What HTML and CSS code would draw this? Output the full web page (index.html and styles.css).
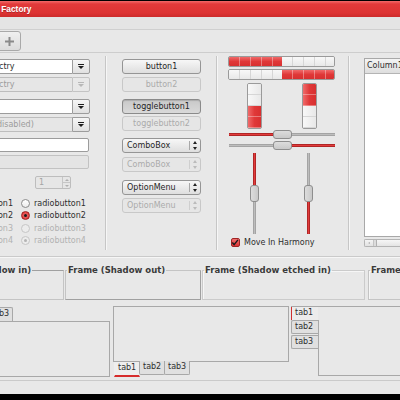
FILE: index.html
```html
<!DOCTYPE html>
<html lang="en">
<head>
  <meta charset="UTF-8">
  <title>Widget Factory</title>
  <link rel="stylesheet" href="styles.css">
</head>
<body>
  <div class="window">
    <div class="titlebar"><span class="title">Widget Factory</span></div>
    <div class="menubar"></div>
    <div class="toolbar">
      <button class="tool-btn">
        <svg width="11" height="11" viewBox="0 0 11 11"><path d="M5.5 1v9M1 5.5h9" stroke="#8a8a8a" stroke-width="2" fill="none"/></svg>
      </button>
    </div>

    <div class="main">
      <!-- entries column -->
      <div class="col col-entries">
        <div class="combo-entry">
          <div class="entry"><span class="cut-text">ctry</span></div>
          <div class="drop"><span class="arrow"></span></div>
        </div>
        <div class="combo-entry disabled pair">
          <div class="entry"><span class="cut-text">ctry</span></div>
          <div class="drop"><span class="arrow"></span></div>
        </div>
        <div class="combo-entry group">
          <div class="entry"></div>
          <div class="drop"><span class="arrow"></span></div>
        </div>
        <div class="combo-entry half-disabled pair">
          <div class="entry"><span class="cut-text cut-d">disabled)</span></div>
          <div class="drop"><span class="arrow"></span></div>
        </div>
        <div class="text-entry group"></div>
        <div class="text-entry disabled pair"></div>
        <div class="spin">
          <span class="spin-value">1</span>
          <span class="spin-btns"><span class="up"></span><span class="down"></span></span>
        </div>
        <div class="radios">
          <div class="radio-row">
            <span class="offside">radiobutton1</span>
            <span class="radio"></span><span>radiobutton1</span>
          </div>
          <div class="radio-row">
            <span class="offside">radiobutton2</span>
            <span class="radio checked"></span><span>radiobutton2</span>
          </div>
          <div class="radio-row disabled">
            <span class="offside">radiobutton3</span>
            <span class="radio"></span><span>radiobutton3</span>
          </div>
          <div class="radio-row disabled">
            <span class="offside">radiobutton4</span>
            <span class="radio checked"></span><span>radiobutton4</span>
          </div>
        </div>
      </div>
      <div class="vsep"></div>

      <!-- buttons column -->
      <div class="col col-buttons">
        <button class="btn">button1</button>
        <button class="btn pair" disabled>button2</button>
        <button class="btn group pressed">togglebutton1</button>
        <button class="btn pair-tight" disabled>togglebutton2</button>
        <button class="btn menu group">ComboBox<span class="menu-arrows"></span></button>
        <button class="btn menu pair-loose" disabled>ComboBox<span class="menu-arrows"></span></button>
        <button class="btn menu group-loose">OptionMenu<span class="menu-arrows"></span></button>
        <button class="btn menu pair" disabled>OptionMenu<span class="menu-arrows"></span></button>
      </div>
      <div class="vsep"></div>

      <!-- ranges column -->
      <div class="col col-ranges">
        <div class="progress"><div class="fill" style="width: 50%"></div><div class="rest"></div></div>
        <div class="progress"><div class="rest"></div><div class="fill" style="width: 50%"></div></div>
        <div class="vprogress-row">
          <div class="vprogress"><div class="rest"></div><div class="fill" style="height: 50%"></div></div>
          <div class="vprogress"><div class="fill" style="height: 50%"></div><div class="rest"></div></div>
        </div>
        <div class="hscale first">
          <div class="track red" style="width: 47px"></div>
          <div class="handle"></div>
          <div class="track"></div>
        </div>
        <div class="hscale">
          <div class="track" style="width: 44px"></div>
          <div class="handle"></div>
          <div class="track red"></div>
        </div>
        <div class="vscale-row">
          <div class="vscale">
            <div class="track red" style="height: 32px"></div>
            <div class="handle"></div>
            <div class="track"></div>
          </div>
          <div class="vscale">
            <div class="track" style="height: 33px"></div>
            <div class="handle"></div>
            <div class="track red"></div>
          </div>
        </div>
        <label class="check">
          <span class="box">
            <svg width="9" height="9" viewBox="0 0 9 9"><path d="M1.5 4.5l2 2.5L7.8 1.5" stroke="#1a1a1a" stroke-width="1.6" fill="none"/></svg>
          </span>
          Move In Harmony
        </label>
      </div>
      <div class="vsep"></div>

      <!-- tree column -->
      <div class="col col-tree">
        <div class="tree">
          <div class="tree-head">Column1</div>
          <div class="tree-body"></div>
        </div>
        <div class="hscroll">
          <span class="scroll-btn"><span class="tiny-arrow"></span></span>
          <span class="scroll-slider"></span>
        </div>
      </div>
    </div>

    <div class="frames">
      <fieldset class="frame shadow-in"><legend>Frame (Shadow in)</legend></fieldset>
      <fieldset class="frame shadow-out"><legend>Frame (Shadow out)</legend></fieldset>
      <fieldset class="frame etched-in"><legend>Frame (Shadow etched in)</legend></fieldset>
      <fieldset class="frame etched-out"><legend>Frame (Shadow etched out)</legend></fieldset>
    </div>

    <div class="notebooks">
      <div class="nb nb-top">
        <div class="tabs">
          <span class="tab active">tab1</span>
          <span class="tab">tab2</span>
          <span class="tab">tab3</span>
        </div>
        <div class="page"></div>
      </div>
      <div class="nb nb-bottom">
        <div class="page"></div>
        <div class="tabs">
          <span class="tab active">tab1</span>
          <span class="tab">tab2</span>
          <span class="tab">tab3</span>
        </div>
      </div>
      <div class="nb nb-left">
        <div class="tabs">
          <span class="tab active">tab1</span>
          <span class="tab">tab2</span>
          <span class="tab">tab3</span>
        </div>
        <div class="page"></div>
      </div>
    </div>

    <div class="statusbar"></div>
  </div>
</body>
</html>
```

FILE: styles.css
```css
* {
  box-sizing: border-box;
}

body {
  margin: 0;
  width: 400px;
  height: 400px;
  overflow: hidden;
  background: #000;
  font-family: "DejaVu Sans", sans-serif;
  font-size: 8px;
  color: #2e2e2e;
}

.window {
  margin-top: 1px;
  height: 393px;
  background: #e8e8e8;
  display: flex;
  flex-direction: column;
  overflow: hidden;
}

/* title + bars */
.titlebar {
  height: 16px;
  flex-shrink: 0;
  background: linear-gradient(#f26a6a 0, #e23a3a 3px, #dd3333 12px, #cc2b2b 100%);
  display: flex;
  align-items: center;
  overflow: hidden;
}

.title {
  font-family: "Liberation Sans", Arial, sans-serif;
  font-weight: bold;
  font-size: 8.4px;
  color: #fff;
  margin-left: -29px;
  white-space: nowrap;
  text-shadow: 0 1px 0 rgba(0, 0, 0, 0.25);
}

.menubar {
  height: 13px;
  flex-shrink: 0;
  background: #e4e4e4;
  border-bottom: 1px solid #cfcfcf;
}

.toolbar {
  height: 23px;
  flex-shrink: 0;
  border-bottom: 1px solid #cdcdcd;
  padding-top: 1px;
}

.tool-btn {
  margin: 0 0 0 -3px;
  width: 24px;
  height: 20px;
  padding: 0;
  border: 1px solid #a9a9a9;
  border-radius: 3px;
  background: linear-gradient(#f0f0f0, #dcdcdc);
  display: flex;
  align-items: center;
  justify-content: center;
}

/* main area */
.main {
  height: 204px;
  flex-shrink: 0;
  display: flex;
  border-bottom: 1px solid #cacaca;
}

.col {
  display: flex;
  flex-direction: column;
  flex-shrink: 0;
}

.vsep {
  width: 1px;
  flex-shrink: 0;
  margin: 3px 0 6px;
  background: #c6c6c6;
  box-shadow: 1px 0 0 #f6f6f6;
}

/* entries */
.col-entries {
  width: 145px;
  margin-left: -40px;
  padding: 6px 15px 0 0;
}

.combo-entry {
  display: flex;
  height: 15px;
}

.pair {
  margin-top: 3px;
}

.pair-tight {
  margin-top: 2px;
}

.pair-loose {
  margin-top: 4px;
}

.group {
  margin-top: 7px;
}

.group-loose {
  margin-top: 8px;
}

.entry {
  flex: 1;
  background: #fff;
  border: 1px solid #9c9c9c;
  border-right: none;
  border-radius: 2px 0 0 2px;
  padding-left: 40px;
  display: flex;
  align-items: center;
  overflow: hidden;
  white-space: nowrap;
}

.cut-text {
  margin-left: -2px;
}

.cut-d {
  margin-left: -4px;
}

.drop {
  width: 18px;
  border: 1px solid #9c9c9c;
  border-radius: 0 2px 2px 0;
  background: linear-gradient(#f6f6f6, #e0e0e0);
  display: flex;
  align-items: center;
  justify-content: center;
}

.arrow {
  width: 0;
  height: 0;
  border-left: 3px solid transparent;
  border-right: 3px solid transparent;
  border-top: 3px solid #1e1e1e;
  position: relative;
  top: 1px;
}

.arrow::before {
  content: "";
  display: block;
  width: 6px;
  height: 1px;
  background: #1e1e1e;
  margin: -5px 0 0 -3px;
}

.combo-entry.disabled .entry,
.combo-entry.half-disabled .entry {
  background: #e6e6e6;
  border-color: #bdbdbd;
  color: #9c9c9c;
}

.combo-entry.disabled .drop {
  border-color: #c4c4c4;
  background: #e8e8e8;
}

.combo-entry.disabled .arrow {
  border-top-color: #b8b8b8;
}

.combo-entry.disabled .arrow::before {
  background: #b8b8b8;
}

.text-entry {
  height: 14px;
  width: 129px;
  background: #fff;
  border: 1px solid #9c9c9c;
  border-radius: 2px;
  margin-top: 6px;
}

.text-entry.disabled {
  background: #e4e4e4;
  border-color: #c2c2c2;
  margin-top: 3px;
}

.spin {
  margin: 7px 0 0 75px;
  width: 36px;
  height: 13px;
  display: flex;
  border: 1px solid #bdbdbd;
  border-radius: 2px;
  background: #e6e6e6;
  color: #a4a4a4;
}

.spin-value {
  flex: 1;
  padding-left: 3px;
  line-height: 11px;
}

.spin-btns {
  width: 8px;
  display: flex;
  flex-direction: column;
  border-left: 1px solid #c6c6c6;
}

.spin-btns span {
  flex: 1;
  display: flex;
  align-items: center;
  justify-content: center;
}

.spin-btns .up {
  border-bottom: 1px solid #c6c6c6;
}

.spin-btns .up::after,
.spin-btns .down::after {
  content: "";
  border-left: 2px solid transparent;
  border-right: 2px solid transparent;
}

.spin-btns .up::after {
  border-bottom: 2px solid #b0b0b0;
}

.spin-btns .down::after {
  border-top: 2px solid #b0b0b0;
}

.radios {
  margin-top: 8px;
}

.radio-row {
  height: 12.5px;
  display: flex;
  align-items: center;
  white-space: nowrap;
}

.offside {
  width: 53px;
  text-align: right;
}

.radio {
  width: 9px;
  height: 9px;
  border-radius: 50%;
  border: 1px solid #8c8c8c;
  background: linear-gradient(#fff, #ececec);
  margin: 0 4px 0 8px;
  flex-shrink: 0;
  display: flex;
  align-items: center;
  justify-content: center;
}

.radio.checked {
  border-color: #a02020;
  background: radial-gradient(circle, #f07070 0, #e03c3c 80%);
}

.radio.checked::after {
  content: "";
  width: 3px;
  height: 3px;
  border-radius: 50%;
  background: #1a1a1a;
}

.radio-row.disabled {
  color: #b2b2b2;
}

.radio-row.disabled .radio {
  border-color: #c6c6c6;
  background: #ececec;
}

.radio-row.disabled .radio.checked::after {
  background: #b4b4b4;
}

/* buttons */
.col-buttons {
  width: 110px;
  padding: 6px 0 0 16px;
}

.btn {
  width: 79px;
  height: 15px;
  padding: 0;
  font-family: inherit;
  font-size: 8px;
  color: #262626;
  border: 1px solid #959595;
  border-radius: 3px;
  background: linear-gradient(#f7f7f7, #dedede);
  flex-shrink: 0;
}

.btn:disabled {
  color: #ababab;
  border-color: #c8c8c8;
  background: #e6e6e6;
}

.btn.pressed {
  background: linear-gradient(#c9c9c9, #d9d9d9);
  border-color: #8a8a8a;
  box-shadow: inset 0 1px 1px rgba(0, 0, 0, 0.15);
}

.btn.menu {
  display: flex;
  align-items: center;
  padding-left: 4px;
  text-align: left;
}

.menu-arrows {
  margin-left: auto;
  width: 11px;
  height: 9px;
  border-left: 1px solid #a8a8a8;
  position: relative;
}

.menu-arrows::before,
.menu-arrows::after {
  content: "";
  position: absolute;
  left: 3px;
  border-left: 2.5px solid transparent;
  border-right: 2.5px solid transparent;
}

.menu-arrows::before {
  top: 0;
  border-bottom: 3px solid #222;
}

.menu-arrows::after {
  bottom: 0;
  border-top: 3px solid #222;
}

.btn:disabled .menu-arrows {
  border-left-color: #cfcfcf;
}

.btn:disabled .menu-arrows::before {
  border-bottom-color: #bbb;
}

.btn:disabled .menu-arrows::after {
  border-top-color: #bbb;
}

/* ranges */
.col-ranges {
  width: 131px;
  padding: 3px 0 0 11px;
}

.progress {
  width: 107px;
  height: 11px;
  border: 1px solid #9a9a9a;
  border-radius: 2px;
  display: flex;
  overflow: hidden;
  margin-bottom: 2px;
}

.progress .fill,
.vprogress .fill {
  background:
    repeating-linear-gradient(90deg, transparent 0 10px, rgba(255, 255, 255, 0.35) 10px 11px),
    linear-gradient(#f06a6a, #e03838 50%, #d83030);
}

.progress .rest {
  flex: 1;
  background:
    repeating-linear-gradient(90deg, transparent 0 10px, #d6d6d6 10px 11px),
    linear-gradient(#f8f8f8, #e8e8e8);
}

.vprogress-row {
  display: flex;
  gap: 40px;
  padding-left: 19px;
  margin-top: 1px;
}

.vprogress {
  width: 15px;
  height: 46px;
  border: 1px solid #9a9a9a;
  border-radius: 2px;
  display: flex;
  flex-direction: column;
  overflow: hidden;
}

.vprogress .rest {
  flex: 1;
  background:
    repeating-linear-gradient(180deg, transparent 0 10px, #d6d6d6 10px 11px),
    linear-gradient(90deg, #f8f8f8, #e8e8e8);
}

.vprogress .fill {
  background:
    repeating-linear-gradient(180deg, transparent 0 10px, rgba(255, 255, 255, 0.35) 10px 11px),
    linear-gradient(90deg, #f06a6a, #e03838 50%, #d83030);
}

.hscale {
  width: 107px;
  height: 9px;
  display: flex;
  align-items: center;
  padding-left: 1px;
  margin-top: 2px;
}

.hscale.first {
  margin-top: 1px;
}

.track {
  flex: 1;
  height: 3px;
  background: #bdbdbd;
  border: 1px solid #a4a4a4;
  border-width: 1px 0;
}

.track.red {
  background: #e23c3c;
  border-color: #b02626;
}

.hscale .handle {
  width: 19px;
  height: 9px;
  border: 1px solid #8e8e8e;
  border-radius: 3px;
  background:
    radial-gradient(circle, #9a9a9a 0.5px, transparent 0.8px) 5px 1px / 2px 2px,
    linear-gradient(#fbfbfb, #dedede);
}

.vscale-row {
  display: flex;
  gap: 45px;
  padding-left: 22px;
  margin-top: 3px;
}

.vscale {
  width: 9px;
  height: 81px;
  display: flex;
  flex-direction: column;
  align-items: center;
}

.vscale .track {
  width: 3px;
  height: auto;
  border-width: 0 1px;
}

.vscale .handle {
  width: 9px;
  height: 17px;
  border: 1px solid #8e8e8e;
  border-radius: 3px;
  background:
    radial-gradient(circle, #9a9a9a 0.5px, transparent 0.8px) 1px 5px / 2px 2px,
    linear-gradient(90deg, #fbfbfb, #dedede);
}

.check {
  display: flex;
  align-items: center;
  margin: 4px 0 0 3px;
  gap: 4px;
}

.box {
  width: 9px;
  height: 9px;
  border: 1px solid #a02424;
  border-radius: 2px;
  background: linear-gradient(#f07070, #dd3434);
  display: flex;
}

.box svg {
  margin: -1px 0 0 -1px;
}

/* tree */
.col-tree {
  flex: 1;
  flex-shrink: 1;
  min-width: 0;
  padding: 5px 0 0 15px;
  overflow: hidden;
}

.tree {
  width: 60px;
  height: 179px;
  border: 1px solid #a8a8a8;
  border-right: none;
  display: flex;
  flex-direction: column;
}

.tree-head {
  height: 15px;
  padding: 0 0 0 2px;
  line-height: 14px;
  border-bottom: 1px solid #b4b4b4;
  background: linear-gradient(#f4f4f4, #dedede);
  white-space: nowrap;
}

.tree-body {
  flex: 1;
  background: #fff;
}

.hscroll {
  margin-top: 2px;
  width: 60px;
  height: 8px;
  display: flex;
  border: 1px solid #b4b4b4;
  border-right: none;
  border-radius: 2px 0 0 2px;
  background: #dcdcdc;
}

.scroll-btn {
  width: 9px;
  display: flex;
  align-items: center;
  justify-content: center;
  background: linear-gradient(#f4f4f4, #e2e2e2);
  border-right: 1px solid #c4c4c4;
}

.tiny-arrow {
  border-top: 1.5px solid transparent;
  border-bottom: 1.5px solid transparent;
  border-right: 2px solid #b0b0b0;
}

.scroll-slider {
  flex: 1;
  margin-left: 2px;
  border-left: 1px solid #b0b0b0;
  background: linear-gradient(#f6f6f6, #e4e4e4);
}

/* frames */
.frames {
  height: 45px;
  flex-shrink: 0;
  display: flex;
  padding-top: 7px;
  border-top: 1px solid #f6f6f6;
}

.frame {
  margin: 0;
  padding: 0;
  height: 35px;
  border: 1px solid #a4a4a4;
  flex-shrink: 0;
}

.frame legend {
  padding: 0 1px;
  margin-left: 1px;
  font-weight: bold;
  font-size: 8.5px;
  line-height: 10px;
  color: #3a3a3a;
  white-space: nowrap;
}

.shadow-in {
  width: 126px;
  margin-left: -62px;
  border-color: #a0a0a0 #c4c4c4 #c4c4c4 #a0a0a0;
}

.shadow-out {
  width: 136px;
  margin-left: 1px;
  border-color: #c4c4c4 #a0a0a0 #a0a0a0 #c4c4c4;
}

.etched-in {
  width: 163px;
  margin-left: 1px;
  border-color: #cbcbcb;
  box-shadow: inset 1px 1px 0 #f6f6f6;
}

.etched-out {
  width: 100px;
  margin-left: 3px;
  border-color: #c4c4c4;
  box-shadow: inset 1px 1px 0 #f6f6f6;
}

/* notebooks */
.notebooks {
  height: 78px;
  flex-shrink: 0;
  display: flex;
  padding-top: 4px;
}

.nb {
  display: flex;
  flex-direction: column;
  flex-shrink: 0;
}

.tab {
  width: 26px;
  height: 14px;
  padding: 0 0 0 3px;
  line-height: 12px;
  border: 1px solid #a8a8a8;
  background: #e0e0e0;
  white-space: nowrap;
}

.nb .page {
  border: 1px solid #a8a8a8;
}

.nb-top {
  width: 174px;
  margin-left: -64px;
  padding-top: 1px;
}

.nb-top .tabs {
  display: flex;
  padding-left: 1px;
}

.nb-top .tab {
  border-bottom: none;
  border-radius: 2px 2px 0 0;
  margin-right: -1px;
}

.nb-top .tab.active {
  background: #ececec;
  border-top: 2px solid #e03030;
}

.nb-top .page {
  height: 56px;
}

.nb-bottom {
  width: 176px;
  margin-left: 3px;
}

.nb-bottom .page {
  height: 56px;
}

.nb-bottom .tabs {
  display: flex;
  padding-left: 1px;
  margin-top: -1px;
}

.nb-bottom .tab {
  height: 14px;
  border-top: none;
  border-radius: 0 0 2px 2px;
  margin-right: -1px;
  background: #e0e0e0;
}

.nb-bottom .tab.active {
  height: 15px;
  background: #eeeeee;
  border-color: transparent;
  border-bottom: 2px solid #d62c2c;
  border-radius: 0;
  margin-top: 1px;
}

.nb-left {
  flex-direction: row;
  margin-left: 2px;
  height: 71px;
  border-top: 1px solid #a8a8a8;
}

.nb-left .tabs {
  display: flex;
  flex-direction: column;
  width: 27px;
}

.nb-left .tab {
  width: 27px;
  border-right: none;
  margin-bottom: 1px;
  border-radius: 2px 0 0 2px;
}

.nb-left .tab.active {
  height: 13px;
  background: #ececec;
  border-color: #a8a8a8;
  border-left-color: #d03030;
  border-top: none;
  border-bottom: none;
  border-radius: 0;
  margin-bottom: 0;
}

.nb-left .page {
  width: 100px;
  height: 56px;
  border-top: none;
  margin-top: 13px;
}

.statusbar {
  flex: 1;
  border-top: 1px solid #cacaca;
}
```
